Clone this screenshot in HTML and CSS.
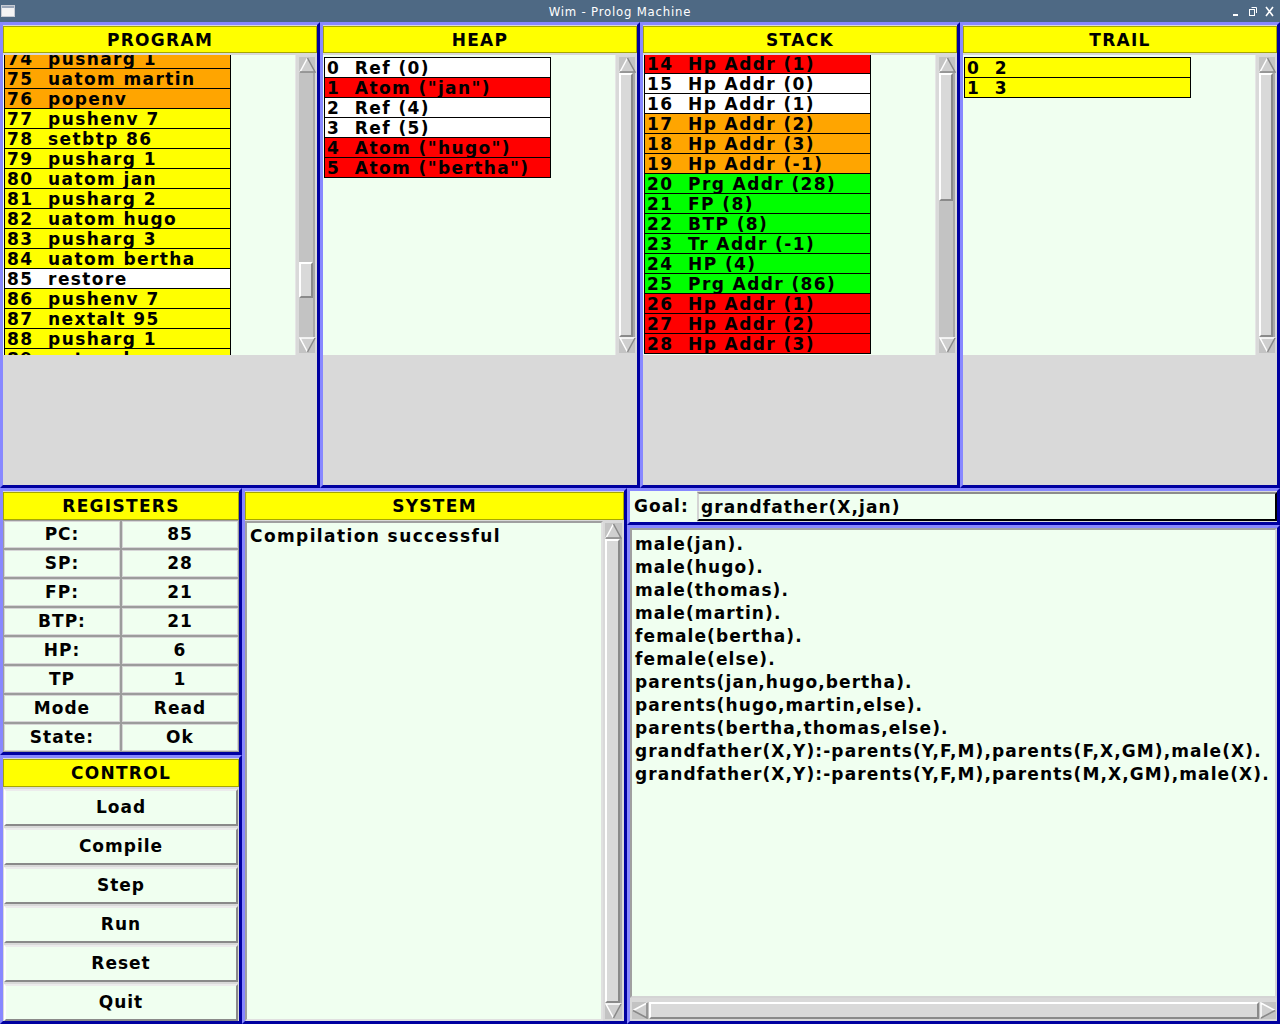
FILE: index.html
```html
<!DOCTYPE html>
<html>
<head>
<meta charset="utf-8">
<title>Wim - Prolog Machine</title>
<link rel="stylesheet" href="styles.css">
</head>
<body>
<div class="titlebar">
  <div class="tb-icon">
    <svg width="16" height="14" viewBox="0 0 16 14"><rect x="1.5" y="1.5" width="13" height="11" fill="#f4f4f4" stroke="#c8ccd4"/><rect x="2" y="2" width="12" height="2" fill="#9aa6b8"/></svg>
  </div>
  <div class="tb-title">Wim - Prolog Machine</div>
  <div class="tb-btns">
    <svg width="48" height="14" viewBox="0 0 48 14">
      <rect x="1" y="10" width="5" height="2" fill="#fff"/>
      <rect x="17.5" y="5.5" width="5" height="6" fill="none" stroke="#fff"/>
      <path d="M19.5 3.5 H24.5 V9" fill="none" stroke="#fff"/>
      <path d="M34 3 L41 12 M41 3 L34 12" stroke="#fff" stroke-width="1.6"/>
    </svg>
  </div>
</div>

<div class="top-row">
  <section class="panel top-panel">
    <div class="header">PROGRAM</div>
    <div class="listframe">
      <div class="list">
        <div class="rows scroll-prog">
          <div class="row orange">74  pusharg 1</div>
          <div class="row orange">75  uatom martin</div>
          <div class="row orange">76  popenv</div>
          <div class="row yellow">77  pushenv 7</div>
          <div class="row yellow">78  setbtp 86</div>
          <div class="row yellow">79  pusharg 1</div>
          <div class="row yellow">80  uatom jan</div>
          <div class="row yellow">81  pusharg 2</div>
          <div class="row yellow">82  uatom hugo</div>
          <div class="row yellow">83  pusharg 3</div>
          <div class="row yellow">84  uatom bertha</div>
          <div class="row white">85  restore</div>
          <div class="row yellow">86  pushenv 7</div>
          <div class="row yellow">87  nextalt 95</div>
          <div class="row yellow">88  pusharg 1</div>
          <div class="row yellow">89  uatom hugo</div>
        </div>
      </div>
      <div class="vscroll">
        <div class="sb-arrow"><svg width="17" height="16" viewBox="0 0 17 16"><polygon points="8.5,1 1,15 16,15" fill="#cfcfcf"/><path d="M1 15 L8.5 1" stroke="#fff" stroke-width="1.5" fill="none"/><path d="M8.5 1 L16 15 L1 15" stroke="#888" stroke-width="1.5" fill="none"/></svg></div>
        <div class="trough"><div class="thumb thumb-prog"></div></div>
        <div class="sb-arrow"><svg width="17" height="16" viewBox="0 0 17 16"><polygon points="1,1 16,1 8.5,15" fill="#cfcfcf"/><path d="M8.5 15 L1 1 L16 1" stroke="#fff" stroke-width="1.5" fill="none"/><path d="M16 1 L8.5 15" stroke="#888" stroke-width="1.5" fill="none"/></svg></div>
      </div>
    </div>
  </section>

  <section class="panel top-panel">
    <div class="header">HEAP</div>
    <div class="listframe">
      <div class="list">
        <div class="rows scroll-none">
          <div class="row white">0  Ref (0)</div>
          <div class="row red">1  Atom ("jan")</div>
          <div class="row white">2  Ref (4)</div>
          <div class="row white">3  Ref (5)</div>
          <div class="row red">4  Atom ("hugo")</div>
          <div class="row red">5  Atom ("bertha")</div>
        </div>
      </div>
      <div class="vscroll">
        <div class="sb-arrow"><svg width="17" height="16" viewBox="0 0 17 16"><polygon points="8.5,1 1,15 16,15" fill="#cfcfcf"/><path d="M1 15 L8.5 1" stroke="#fff" stroke-width="1.5" fill="none"/><path d="M8.5 1 L16 15 L1 15" stroke="#888" stroke-width="1.5" fill="none"/></svg></div>
        <div class="trough"><div class="thumb thumb-full"></div></div>
        <div class="sb-arrow"><svg width="17" height="16" viewBox="0 0 17 16"><polygon points="1,1 16,1 8.5,15" fill="#cfcfcf"/><path d="M8.5 15 L1 1 L16 1" stroke="#fff" stroke-width="1.5" fill="none"/><path d="M16 1 L8.5 15" stroke="#888" stroke-width="1.5" fill="none"/></svg></div>
      </div>
    </div>
  </section>

  <section class="panel top-panel">
    <div class="header">STACK</div>
    <div class="listframe">
      <div class="list">
        <div class="rows scroll-stack">
          <div class="row red">14  Hp Addr (1)</div>
          <div class="row white">15  Hp Addr (0)</div>
          <div class="row white">16  Hp Addr (1)</div>
          <div class="row orange">17  Hp Addr (2)</div>
          <div class="row orange">18  Hp Addr (3)</div>
          <div class="row orange">19  Hp Addr (-1)</div>
          <div class="row green">20  Prg Addr (28)</div>
          <div class="row green">21  FP (8)</div>
          <div class="row green">22  BTP (8)</div>
          <div class="row green">23  Tr Addr (-1)</div>
          <div class="row green">24  HP (4)</div>
          <div class="row green">25  Prg Addr (86)</div>
          <div class="row red">26  Hp Addr (1)</div>
          <div class="row red">27  Hp Addr (2)</div>
          <div class="row red">28  Hp Addr (3)</div>
        </div>
      </div>
      <div class="vscroll">
        <div class="sb-arrow"><svg width="17" height="16" viewBox="0 0 17 16"><polygon points="8.5,1 1,15 16,15" fill="#cfcfcf"/><path d="M1 15 L8.5 1" stroke="#fff" stroke-width="1.5" fill="none"/><path d="M8.5 1 L16 15 L1 15" stroke="#888" stroke-width="1.5" fill="none"/></svg></div>
        <div class="trough"><div class="thumb thumb-stack"></div></div>
        <div class="sb-arrow"><svg width="17" height="16" viewBox="0 0 17 16"><polygon points="1,1 16,1 8.5,15" fill="#cfcfcf"/><path d="M8.5 15 L1 1 L16 1" stroke="#fff" stroke-width="1.5" fill="none"/><path d="M16 1 L8.5 15" stroke="#888" stroke-width="1.5" fill="none"/></svg></div>
      </div>
    </div>
  </section>

  <section class="panel top-panel">
    <div class="header">TRAIL</div>
    <div class="listframe">
      <div class="list">
        <div class="rows scroll-none">
          <div class="row yellow">0  2</div>
          <div class="row yellow">1  3</div>
        </div>
      </div>
      <div class="vscroll">
        <div class="sb-arrow"><svg width="17" height="16" viewBox="0 0 17 16"><polygon points="8.5,1 1,15 16,15" fill="#cfcfcf"/><path d="M1 15 L8.5 1" stroke="#fff" stroke-width="1.5" fill="none"/><path d="M8.5 1 L16 15 L1 15" stroke="#888" stroke-width="1.5" fill="none"/></svg></div>
        <div class="trough"><div class="thumb thumb-full"></div></div>
        <div class="sb-arrow"><svg width="17" height="16" viewBox="0 0 17 16"><polygon points="1,1 16,1 8.5,15" fill="#cfcfcf"/><path d="M8.5 15 L1 1 L16 1" stroke="#fff" stroke-width="1.5" fill="none"/><path d="M16 1 L8.5 15" stroke="#888" stroke-width="1.5" fill="none"/></svg></div>
      </div>
    </div>
  </section>
</div>

<div class="bottom-row">
  <div class="left-col">
    <section class="panel registers">
      <div class="header">REGISTERS</div>
      <div class="reg-grid">
        <div class="cell">PC:</div><div class="cell">85</div>
        <div class="cell">SP:</div><div class="cell">28</div>
        <div class="cell">FP:</div><div class="cell">21</div>
        <div class="cell">BTP:</div><div class="cell">21</div>
        <div class="cell">HP:</div><div class="cell">6</div>
        <div class="cell">TP</div><div class="cell">1</div>
        <div class="cell">Mode</div><div class="cell">Read</div>
        <div class="cell">State:</div><div class="cell">Ok</div>
      </div>
    </section>
    <section class="panel control">
      <div class="header">CONTROL</div>
      <div class="btn">Load</div>
      <div class="btn">Compile</div>
      <div class="btn">Step</div>
      <div class="btn">Run</div>
      <div class="btn">Reset</div>
      <div class="btn">Quit</div>
    </section>
  </div>

  <section class="panel system">
    <div class="header">SYSTEM</div>
    <div class="sysframe">
      <div class="systext">Compilation successful</div>
      <div class="vscroll vscroll-sys">
        <div class="sb-arrow"><svg width="17" height="16" viewBox="0 0 17 16"><polygon points="8.5,1 1,15 16,15" fill="#cfcfcf"/><path d="M1 15 L8.5 1" stroke="#fff" stroke-width="1.5" fill="none"/><path d="M8.5 1 L16 15 L1 15" stroke="#888" stroke-width="1.5" fill="none"/></svg></div>
        <div class="trough"><div class="thumb thumb-full"></div></div>
        <div class="sb-arrow"><svg width="17" height="16" viewBox="0 0 17 16"><polygon points="1,1 16,1 8.5,15" fill="#cfcfcf"/><path d="M8.5 15 L1 1 L16 1" stroke="#fff" stroke-width="1.5" fill="none"/><path d="M16 1 L8.5 15" stroke="#888" stroke-width="1.5" fill="none"/></svg></div>
      </div>
    </div>
  </section>

  <div class="right-col">
    <section class="panel goal">
      <div class="goal-label">Goal:</div>
      <div class="goal-entry">grandfather(X,jan)</div>
    </section>
    <section class="panel source">
      <div class="srctext">male(jan).
male(hugo).
male(thomas).
male(martin).
female(bertha).
female(else).
parents(jan,hugo,bertha).
parents(hugo,martin,else).
parents(bertha,thomas,else).
grandfather(X,Y):-parents(Y,F,M),parents(F,X,GM),male(X).
grandfather(X,Y):-parents(Y,F,M),parents(M,X,GM),male(X).</div>
      <div class="hscroll">
        <div class="hs-arrow"><svg width="17" height="17" viewBox="0 0 17 17"><polygon points="1,8.5 15,1 15,16" fill="#cfcfcf"/><path d="M15 1 L1 8.5" stroke="#fff" stroke-width="1.5" fill="none"/><path d="M1 8.5 L15 16 L15 1" stroke="#888" stroke-width="1.5" fill="none"/></svg></div>
        <div class="hthumb"></div>
        <div class="hs-arrow"><svg width="17" height="17" viewBox="0 0 17 17"><polygon points="16,8.5 2,1 2,16" fill="#cfcfcf"/><path d="M2 16 L2 1 L16 8.5" stroke="#fff" stroke-width="1.5" fill="none"/><path d="M16 8.5 L2 16" stroke="#888" stroke-width="1.5" fill="none"/></svg></div>
      </div>
    </section>
  </div>
</div>
</body>
</html>
```

FILE: styles.css
```css
* { box-sizing: border-box; }
html, body { margin: 0; padding: 0; }
body {
  width: 1280px;
  height: 1024px;
  overflow: hidden;
  background: #d9d9d9;
  font-family: "DejaVu Sans", "Liberation Sans", sans-serif;
  font-weight: bold;
  font-size: 17px;
  letter-spacing: 1px;
  color: #000;
}

/* title bar */
.titlebar {
  height: 22px;
  background: #4e6984;
  display: flex;
  align-items: center;
  color: #fff;
}
.tb-icon { width: 20px; height: 14px; display: flex; }
.tb-title {
  flex: 1;
  text-align: center;
  font-family: "DejaVu Sans Condensed", "DejaVu Sans", sans-serif;
  font-weight: normal;
  font-size: 13px;
  letter-spacing: 0.8px;
  padding-right: 12px;
}
.tb-btns { width: 48px; height: 14px; display: flex; }

/* panels */
.panel {
  border: 3px solid;
  border-color: #8888ff #0000a0 #0000a0 #8888ff;
  background: #d9d9d9;
}
.header {
  background: #ffff00;
  border: 1px solid #a6a600;
  height: 28px;
  margin-top: 1px;
  line-height: 26px;
  text-align: center;
  letter-spacing: 1.3px;
}

.top-row { display: flex; height: 466px; }
.top-panel { width: 320px; display: flex; flex-direction: column; }
.top-panel .header { height: 27px; line-height: 27px; }
.listframe { display: flex; height: 300px; margin-top: 2px; }
.list { width: 292px; background: #f0fff0; overflow: hidden; padding-left: 1px; }
.rows { padding-top: 2px; }
.scroll-prog { margin-top: -9px; }
.scroll-stack { margin-top: -4px; }
.row {
  width: 227px;
  height: 21px;
  border: 1px solid #000;
  line-height: 17px;
  padding: 2px 0 0 2px;
  white-space: pre;
  overflow: hidden;
  letter-spacing: 1.4px;
}
.row + .row { margin-top: -1px; }
.orange { background: #ffa500; }
.yellow { background: #ffff00; }
.white { background: #ffffff; }
.red { background: #ff0000; }
.green { background: #00ff00; }

/* vertical scrollbar */
.vscroll {
  width: 22px;
  padding: 2px 2px 2px 3px;
  display: flex;
  flex-direction: column;
  background: #d9d9d9;
  border-left: 1px solid #e6e6e6;
}
.vscroll .sb-arrow { height: 16px; background: #c3c3c3; }
.vscroll .sb-arrow svg { display: block; }
.trough { flex: 1; background: #c3c3c3; display: flex; flex-direction: column; border-right: 2px solid #a8a8a8; }
.thumb {
  background: #d9d9d9;
  border: 2px solid;
  border-color: #ffffff #8a8a8a #8a8a8a #ffffff;
}
.thumb-prog { margin-top: 189px; height: 36px; }
.thumb-stack { margin-top: 0; height: 128px; }
.thumb-full { flex: 1; }

/* bottom */
.bottom-row { display: flex; height: 536px; }
.left-col { width: 242px; display: flex; flex-direction: column; }
.registers { height: 267px; }
.reg-grid { display: grid; grid-template-columns: 118px 118px; }
.cell {
  height: 29px;
  border: 1px solid #9c9c9c;
  box-shadow: inset 0 0 0 1px #d6d6d6;
  background: #f0fff0;
  text-align: center;
  line-height: 27px;
}
.control { height: 269px; }
.btn {
  height: 37px;
  margin: 2px 1px 0 1px;
  background: #f0fff0;
  border: 2px solid;
  border-color: #ececec #8a8a8a #8a8a8a #ffffff;
  text-align: center;
  line-height: 32px;
}

.system { width: 385px; display: flex; flex-direction: column; }
.sysframe { flex: 1; display: flex; margin-top: 1px; }
.systext {
  width: 358px;
  background: #f0fff0;
  border: 2px solid;
  border-color: #a0a0a0 #e0e0e0 #e0e0e0 #a0a0a0;
  padding: 2px 0 0 3px;
  line-height: 22px;
  letter-spacing: 1.4px;
}
.vscroll-sys { width: 21px; padding: 2px; border-left: none; }

.right-col { width: 653px; display: flex; flex-direction: column; }
.goal { height: 37px; display: flex; padding: 1px 0; }
.goal-label {
  width: 67px;
  background: #f0fff0;
  padding-left: 4px;
  margin-top: -1px;
  margin-bottom: -1px;
  line-height: 30px;
}
.goal-entry {
  flex: 1;
  background: #f0fff0;
  border: 2px solid;
  border-color: #8c8c8c #000000 #000000 #d4d4d4;
  padding-left: 2px;
  line-height: 26px;
  letter-spacing: 1.1px;
}
.source { flex: 1; display: flex; flex-direction: column; }
.srctext {
  height: 470px;
  background: #f0fff0;
  border: 2px solid;
  border-color: #a0a0a0 #d4d4d4 #d4d4d4 #a0a0a0;
  padding: 3px 0 0 3px;
  white-space: pre;
  line-height: 23px;
  letter-spacing: 1.1px;
}
.hscroll {
  height: 23px;
  padding: 4px 1px 2px 2px;
  display: flex;
}
.hs-arrow { width: 17px; height: 17px; background: #c3c3c3; }
.hs-arrow svg { display: block; }
.hthumb {
  flex: 1;
  background: #d9d9d9;
  border: 2px solid;
  border-color: #ffffff #8a8a8a #8a8a8a #ffffff;
}
```
